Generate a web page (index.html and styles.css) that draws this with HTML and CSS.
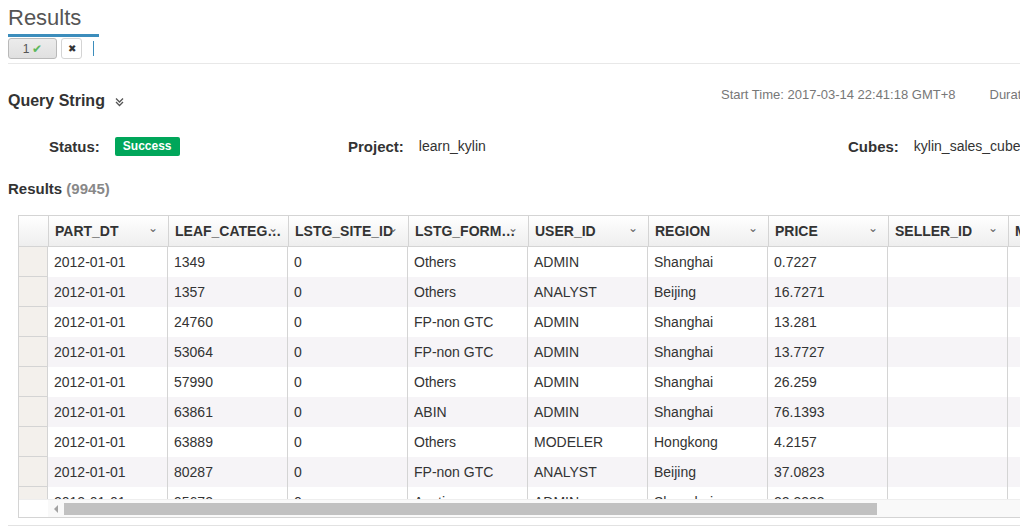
FILE: index.html
```html
<!DOCTYPE html>
<html>
<head>
<meta charset="utf-8">
<link rel="stylesheet" href="styles.css">
</head>
<body>
<div class="page">
  <div class="title-wrap">
    <h2 class="title">Results</h2>
  </div>
  <div class="tabs">
    <button class="tab tab-active">1 <span class="check">&#10004;</span></button>
    <button class="tab tab-close">&#10006;</button>
    <span class="cursor"></span>
  </div>
  <div class="rule"></div>

  <div class="query-row">
    <div class="query-title">Query String
      <svg class="dchev" width="9" height="10" viewBox="0 0 9 10"><path d="M1 1.5 L4.5 5 L8 1.5 M1 5 L4.5 8.5 L8 5" fill="none" stroke="#555" stroke-width="1.3"/></svg>
    </div>
    <div class="start-time"><span>Start Time: 2017-03-14 22:41:18 GMT+8</span><span class="duration">Duration: 0.84 seconds</span></div>
  </div>

  <div class="info-row">
    <div class="info"><span class="label">Status:</span><span class="badge">Success</span></div>
    <div class="info"><span class="label">Project:</span><span class="value">learn_kylin</span></div>
    <div class="info"><span class="label">Cubes:</span><span class="value">kylin_sales_cube</span></div>
  </div>

  <div class="results-title">Results <span class="count">(9945)</span></div>

  <div class="grid">
    <div class="grid-head">
      <div class="rh rh-head"></div>
      <div class="hcell"><span class="htext">PART_DT</span><span class="sort">&#8964;</span></div>
      <div class="hcell"><span class="htext">LEAF_CATEG_ID</span><span class="sort">&#8964;</span></div>
      <div class="hcell"><span class="htext">LSTG_SITE_ID</span><span class="sort">&#8964;</span></div>
      <div class="hcell"><span class="htext">LSTG_FORMAT_NAME</span><span class="sort">&#8964;</span></div>
      <div class="hcell"><span class="htext">USER_ID</span><span class="sort">&#8964;</span></div>
      <div class="hcell"><span class="htext">REGION</span><span class="sort">&#8964;</span></div>
      <div class="hcell"><span class="htext">PRICE</span><span class="sort">&#8964;</span></div>
      <div class="hcell"><span class="htext">SELLER_ID</span><span class="sort">&#8964;</span></div>
      <div class="hcell"><span class="htext">MINUTE_START</span><span class="sort">&#8964;</span></div>
    </div>
    <div class="grid-body">
      <div class="row"><div class="rh"></div><div class="cell">2012-01-01</div><div class="cell">1349</div><div class="cell">0</div><div class="cell">Others</div><div class="cell">ADMIN</div><div class="cell">Shanghai</div><div class="cell">0.7227</div><div class="cell"></div><div class="cell"></div></div>
      <div class="row"><div class="rh"></div><div class="cell">2012-01-01</div><div class="cell">1357</div><div class="cell">0</div><div class="cell">Others</div><div class="cell">ANALYST</div><div class="cell">Beijing</div><div class="cell">16.7271</div><div class="cell"></div><div class="cell"></div></div>
      <div class="row"><div class="rh"></div><div class="cell">2012-01-01</div><div class="cell">24760</div><div class="cell">0</div><div class="cell">FP-non GTC</div><div class="cell">ADMIN</div><div class="cell">Shanghai</div><div class="cell">13.281</div><div class="cell"></div><div class="cell"></div></div>
      <div class="row"><div class="rh"></div><div class="cell">2012-01-01</div><div class="cell">53064</div><div class="cell">0</div><div class="cell">FP-non GTC</div><div class="cell">ADMIN</div><div class="cell">Shanghai</div><div class="cell">13.7727</div><div class="cell"></div><div class="cell"></div></div>
      <div class="row"><div class="rh"></div><div class="cell">2012-01-01</div><div class="cell">57990</div><div class="cell">0</div><div class="cell">Others</div><div class="cell">ADMIN</div><div class="cell">Shanghai</div><div class="cell">26.259</div><div class="cell"></div><div class="cell"></div></div>
      <div class="row"><div class="rh"></div><div class="cell">2012-01-01</div><div class="cell">63861</div><div class="cell">0</div><div class="cell">ABIN</div><div class="cell">ADMIN</div><div class="cell">Shanghai</div><div class="cell">76.1393</div><div class="cell"></div><div class="cell"></div></div>
      <div class="row"><div class="rh"></div><div class="cell">2012-01-01</div><div class="cell">63889</div><div class="cell">0</div><div class="cell">Others</div><div class="cell">MODELER</div><div class="cell">Hongkong</div><div class="cell">4.2157</div><div class="cell"></div><div class="cell"></div></div>
      <div class="row"><div class="rh"></div><div class="cell">2012-01-01</div><div class="cell">80287</div><div class="cell">0</div><div class="cell">FP-non GTC</div><div class="cell">ANALYST</div><div class="cell">Beijing</div><div class="cell">37.0823</div><div class="cell"></div><div class="cell"></div></div>
      <div class="row"><div class="rh"></div><div class="cell">2012-01-01</div><div class="cell">95672</div><div class="cell">0</div><div class="cell">Auction</div><div class="cell">ADMIN</div><div class="cell">Shanghai</div><div class="cell">22.3333</div><div class="cell"></div><div class="cell"></div></div>
    </div>
    <div class="grid-scroll">
      <div class="scroll-gap"></div>
      <div class="scroll-track">
        <span class="scroll-arrow"></span>
        <span class="scroll-thumb"></span>
      </div>
    </div>
  </div>
  <div class="bottom-rule"></div>
</div>
</body>
</html>
```

FILE: styles.css
```css
html, body {
  margin: 0;
  padding: 0;
  width: 1020px;
  height: 526px;
  overflow: hidden;
  background: #fff;
  font-family: "Liberation Sans", Arial, sans-serif;
  color: #333;
}

.page {
  padding: 0 0 0 8px;
  width: 1300px;
}

.title-wrap {
  display: inline-block;
  border-bottom: 3px solid #3c8dbc;
  padding-right: 18px;
}

.title {
  margin: 0;
  padding-top: 5px;
  padding-bottom: 3px;
  font-size: 22px;
  font-weight: normal;
  line-height: 26px;
  color: #555;
}

.tabs {
  display: flex;
  align-items: center;
  gap: 4px;
  margin-top: 1px;
  height: 21px;
}

.tab {
  height: 21px;
  padding: 0;
  border: 1px solid #b9b9b9;
  border-radius: 3px;
  font-family: "Liberation Sans", Arial, sans-serif;
  font-size: 12px;
  color: #555;
  display: flex;
  align-items: center;
  justify-content: center;
}

.tab-active {
  width: 49px;
  background: linear-gradient(#ececec, #e0e0e0);
  gap: 3px;
}

.check {
  color: #5cb85c;
  font-size: 12px;
}

.tab-close {
  width: 21px;
  background: #fff;
  border-color: #d4d4d4;
  color: #333;
  font-size: 10px;
}

.cursor {
  display: inline-block;
  width: 1px;
  height: 15px;
  background: #3c8dbc;
  margin-left: 7px;
}

.rule {
  margin-top: 4px;
  height: 1px;
  background: #e8e8e8;
}

.query-row {
  display: flex;
  align-items: flex-start;
  margin-top: 22px;
  height: 30px;
}

.query-title {
  font-size: 16px;
  font-weight: bold;
  color: #333;
  width: 713px;
  line-height: 26px;
  padding-top: 2px;
}

.dchev {
  margin-left: 6px;
  vertical-align: -1px;
}

.start-time {
  font-size: 13px;
  color: #777;
  white-space: nowrap;
  line-height: 16px;
  padding-top: 1px;
}

.duration {
  margin-left: 34px;
}

.info-row {
  display: grid;
  grid-template-columns: 299px 500px 1fr;
  padding-left: 41px;
  margin-top: 12px;
  height: 36px;
  align-items: center;
}

.info {
  display: flex;
  align-items: center;
  white-space: nowrap;
}

.label {
  font-size: 15px;
  font-weight: bold;
  color: #333;
  margin-right: 15px;
}

.value {
  font-size: 14px;
  color: #333;
}

.badge {
  display: inline-block;
  background: #00a65a;
  color: #fff;
  font-size: 12px;
  font-weight: bold;
  line-height: 19px;
  height: 19px;
  padding: 0 8px;
  border-radius: 2px;
}

.results-title {
  font-size: 15px;
  font-weight: bold;
  color: #333;
  margin-top: 15px;
  line-height: 20px;
}

.count {
  color: #888;
}

.grid {
  margin-top: 16px;
  margin-left: 10px;
  border: 1px solid #d4d4d4;
  width: 1280px;
}

.grid-head {
  display: flex;
  height: 30px;
  border-bottom: 1px solid #d4d4d4;
  background: linear-gradient(#ffffff, #eeeeee);
}

.rh {
  flex: 0 0 29px;
  border-right: 1px solid #d4d4d4;
  background: #f3f0ec;
}

.rh-head {
  background: transparent;
}

.hcell {
  position: relative;
  flex: 0 0 120px;
  box-sizing: border-box;
  border-right: 1px solid #d4d4d4;
  display: flex;
  align-items: center;
  padding: 0 6px;
  font-size: 14px;
  font-weight: bold;
  color: #333;
  overflow: hidden;
}

.htext {
  overflow: hidden;
  white-space: nowrap;
  text-overflow: ellipsis;
}

.sort {
  position: absolute;
  right: 10px;
  top: 5px;
  font-size: 12px;
  font-weight: normal;
  color: #666;
}

.grid-body {
  height: 252px;
  overflow: hidden;
}

.row {
  display: flex;
  height: 30px;
  background: #fff;
}

.row:nth-child(even) {
  background: #f6f4f7;
}

.row .rh {
  border-bottom: 1px solid #d4d4d4;
  box-sizing: border-box;
}

.cell {
  flex: 0 0 120px;
  box-sizing: border-box;
  border-right: 1px solid #d4d4d4;
  padding: 0 6px;
  font-size: 14px;
  line-height: 30px;
  color: #333;
  white-space: nowrap;
  overflow: hidden;
}

.grid-scroll {
  display: flex;
  height: 17px;
  border-top: 1px solid #eee;
}

.scroll-gap {
  flex: 0 0 29px;
  background: #fff;
}

.scroll-track {
  flex: 1;
  background: #f9f9f9;
  display: flex;
  align-items: center;
  padding-left: 6px;
}

.scroll-arrow {
  width: 0;
  height: 0;
  border-top: 4px solid transparent;
  border-bottom: 4px solid transparent;
  border-right: 4px solid #a3a3a3;
  margin-right: 6px;
}

.scroll-thumb {
  width: 813px;
  height: 12px;
  background: #c1c1c1;
}

.bottom-rule {
  margin-top: 7px;
  height: 1px;
  background: #e2e2e2;
}
```
